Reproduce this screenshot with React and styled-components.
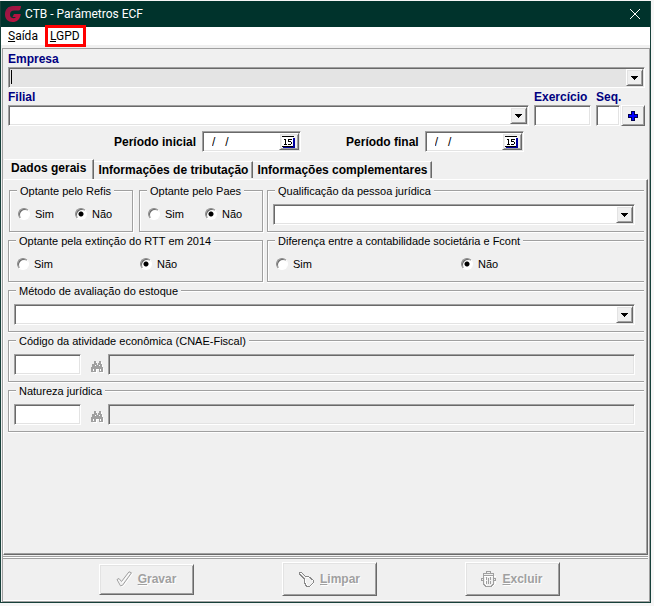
import React from 'react';
import styled, { createGlobalStyle, css } from 'styled-components';

const GlobalStyle = createGlobalStyle`
  * {
    box-sizing: border-box;
  }

  body {
    margin: 0;
    background: #f6f6f6;
    font-family: 'Liberation Sans', Arial, sans-serif;
    font-size: 12px;
    color: #000;
  }

  input, select, button {
    font: inherit;
    color: inherit;
    margin: 0;
    outline: 0;
  }
`;

const raised = css`
  background: #f0f0f0;
  border: 1px solid;
  border-color: #fff #696969 #696969 #fff;
  box-shadow: inset 1px 1px 0 #e3e3e3, inset -1px -1px 0 #a0a0a0;
`;

const sunken = css`
  border: 1px solid;
  border-color: #a0a0a0 #fff #fff #a0a0a0;
  box-shadow: inset 1px 1px 0 #696969, inset -1px -1px 0 #e3e3e3;
`;

const Page = styled.div`
  display: flex;
  min-height: 100vh;
  padding: 1px 3px 3px 0;
`;

const Window = styled.main`
  flex: 1;
  min-width: 0;
  display: flex;
  flex-direction: column;
  background: #f0f0f0;
  border: solid #17403a;
  border-width: 0 1px 1px;
`;

const TitleBar = styled.header`
  display: flex;
  align-items: center;
  gap: 3px;
  height: 26px;
  padding: 0 9px 0 3px;
  background: #00332c;
  color: #fff;
  font-family: Roboto, 'Segoe UI', sans-serif;
`;

const Title = styled.h1`
  flex: 1;
  margin: 0;
  font-size: 12px;
  font-weight: 400;
`;

const CloseButton = styled.button`
  display: flex;
  padding: 0;
  border: 0;
  background: none;
  color: #fff;
`;

const MenuBar = styled.nav`
  display: flex;
  align-items: center;
  height: 18px;
  padding-left: 7px;
  gap: 7px;
  background: #fff;
  font-family: Roboto, 'Segoe UI', sans-serif;
`;

const MenuItem = styled.a`
  color: #000;
  text-decoration: none;
  line-height: 16px;
  ${props => props.$marked && css`
    border: 3px solid #f00;
    padding: 0 3px 0 2px;
  `}
`;

const Body = styled.form`
  flex: 1;
  display: flex;
  flex-direction: column;
  margin: 3px 0 0 1px;
  border: 1px solid #a0a0a0;
`;

const Filters = styled.section`
  padding: 2px 4px 0 5px;
  font-weight: 700;
`;

const Field = styled.div`
  display: flex;
  flex-direction: column;
  flex: ${props => (props.$width ? 'none' : 1)};
  width: ${props => (props.$width ? `${props.$width}px` : 'auto')};
  min-width: 0;
`;

const Caption = styled.label`
  color: #000080;
  font-size: 12px;
  line-height: 16px;
  white-space: nowrap;
`;

const Line = styled.div`
  display: flex;
  align-items: flex-end;
  gap: ${props => props.$gap}px;
  margin-top: ${props => props.$top || 0}px;
`;

const Box = styled.div`
  ${sunken}
  display: flex;
  flex: 1;
  height: 21px;
  min-height: 21px;
  padding: 1px;
  background: ${props => (props.$gray ? '#e4e4e4' : '#fff')};
`;

const Select = styled.select`
  flex: 1;
  min-width: 0;
  padding: 0;
  appearance: none;
  border: 0;
  background: transparent;
`;

const Caret = styled.span`
  width: 1px;
  margin: 1px 0 2px 1px;
  background: #000;
`;

const DropMark = styled.span`
  ${raised}
  display: flex;
  align-items: center;
  justify-content: center;
  width: 17px;
`;

const TextBox = styled.input`
  ${sunken}
  height: 21px;
  width: ${props => (props.$width ? `${props.$width}px` : '100%')};
  flex: ${props => (props.$grow ? 1 : 'none')};
  min-width: 0;
  padding: 0 3px;
  background: ${props => (props.disabled ? '#f0f0f0' : '#fff')};
`;

const AddButton = styled.button`
  ${raised}
  display: flex;
  align-items: center;
  justify-content: center;
  width: 24px;
  height: 21px;
  padding: 0;
`;

const Dates = styled.div`
  display: flex;
  gap: 45px;
  padding: 5px 0 0 106px;
`;

const DateField = styled.div`
  display: flex;
  align-items: center;
  gap: 6px;
`;

const DateBox = styled(Box)`
  flex: none;
  width: 99px;
`;

const DateInput = styled.input`
  flex: 1;
  min-width: 0;
  padding: 0 8px;
  border: 0;
  background: transparent;
  font-weight: 400;
  white-space: pre;
`;

const CalendarButton = styled.button`
  ${raised}
  display: flex;
  align-items: center;
  justify-content: center;
  width: 20px;
  padding: 0;
`;

const TabList = styled.div`
  display: flex;
  align-items: flex-end;
  height: 20px;
  margin-top: 7px;
  padding-left: 1px;
`;

const Tab = styled.button`
  height: ${props => (props.$active ? 20 : 17)}px;
  margin-bottom: ${props => (props.$active ? 0 : 1)}px;
  padding: ${props => (props.$active ? '0 7px 3px' : '0 4px')};
  border: solid;
  border-width: 1px 1px 0 0;
  border-color: #fff #696969;
  box-shadow: inset -1px 0 0 #a0a0a0;
  background: #f0f0f0;
  font-weight: 700;
  white-space: nowrap;
`;

const TabPanel = styled.section`
  flex: 1;
  display: flex;
  flex-direction: column;
  gap: 1px;
  margin-right: 1px;
  padding: 3px 3px 0 4px;
  border: 1px solid;
  border-color: #fff #696969 #696969 #fff;
  box-shadow: inset -1px -1px 0 #a0a0a0;
`;

const Columns = styled.div`
  display: flex;
  gap: 4px;
`;

const Pair = styled.div`
  display: flex;
  gap: 6px;
  width: 255px;
  padding-left: 1px;
`;

const Group = styled.fieldset`
  flex: ${props => (props.$width ? 'none' : 1)};
  width: ${props => (props.$width ? `${props.$width}px` : 'auto')};
  min-width: 0;
  height: 49px;
  margin: 0;
  padding: 0 9px 0 5px;
  border: 1px solid #a0a0a0;
  border-right-width: ${props => (props.$open ? 0 : 1)}px;
  box-shadow: ${props => (props.$open ? 0 : 1)}px 1px 0 #fff, inset 1px 1px 0 #fff;
`;

const Legend = styled.legend`
  margin-left: 2px;
  padding: 2px 3px 0;
  background: #f0f0f0;
  font-size: 11px;
  line-height: 12px;
  white-space: nowrap;
`;

const GroupRow = styled.div`
  display: flex;
  align-items: center;
  height: ${props => (props.$short ? 31 : 33)}px;
  padding-top: 2px;
`;

const RadioLabel = styled.label`
  display: flex;
  align-items: center;
  gap: 5px;
  width: ${props => (props.$width ? `${props.$width}px` : 'auto')};
  padding-left: 3px;
  font-size: 11px;
`;

const Radio = styled.input`
  appearance: none;
  width: 12px;
  height: 12px;
  border-radius: 50%;
  border: 1px solid;
  border-color: #8a8a8a #fff #fff #8a8a8a;
  background: #fff;
  box-shadow: inset 1px 1px 0 #696969;

  &:checked {
    background: radial-gradient(circle, #000 2px, #fff 3px);
  }
`;

const SearchButton = styled.button`
  display: flex;
  padding: 5px 4px 0 10px;
  border: 0;
  background: none;
`;

const Footer = styled.footer`
  display: flex;
  align-items: center;
  justify-content: center;
  gap: 88px;
  margin: 3px 1px 1px 0;
  padding: 3px 0 4px 7px;
  border-top: 1px solid #a0a0a0;
  box-shadow: 0 -1px 0 #fff, 0 -2px 0 #a0a0a0, 0 1px 0 #fff;
`;

const ActionButton = styled.button`
  ${raised}
  display: flex;
  align-items: center;
  justify-content: center;
  gap: 5px;
  width: 95px;
  height: ${props => (props.$low ? 31 : 34)}px;
  padding: 0;
  color: #a0a0a0;
  font-weight: 700;
  text-shadow: 1px 1px 0 #fff;
`;

function Arrow() {
  return (
    <svg width="7" height="4" viewBox="0 0 7 4" shapeRendering="crispEdges">
      <path d="M0 0h7v1H6v1H5v1H4v1H3V3H2V2H1V1H0z" />
    </svg>
  );
}

function Combo({ id, label, gray, caret }) {
  return (
    <Box $gray={gray}>
      {caret && <Caret />}
      <Select id={id} aria-label={label} />
      <DropMark><Arrow /></DropMark>
    </Box>
  );
}

function Logo() {
  return (
    <svg width="18" height="18" viewBox="0 0 18 18">
      <defs>
        <linearGradient id="logo" x1="0" y1="0" x2="1" y2="1">
          <stop offset="0" stopColor="#8d1745" />
          <stop offset="1" stopColor="#c5123f" />
        </linearGradient>
      </defs>
      <path
        fill="url(#logo)"
        d="M17 1H9C4 1 1 4.500 1 9.500 1 14 4 17 8.500 17c4.500 0 7.500-2.500 8.300-8H10L8.500 12H12c-.7.800-1.700 1.200-2.800 1.200C7.200 13.200 6 11.800 6 9.600 6 7.200 7.600 5.600 10.200 5.600h4.300C16 5.400 17 3.500 17 1z"
      />
    </svg>
  );
}

function Plus() {
  return (
    <svg width="10" height="10" viewBox="0 0 10 10" shapeRendering="crispEdges">
      <path fill="#000050" d="M3 0h4v3h3v4H7v3H3V7H0V3h3z" />
      <path fill="#00f" d="M4 1h2v3h3v2H6v3H4V6H1V4h3z" />
    </svg>
  );
}

function Calendar() {
  return (
    <svg width="14" height="12" viewBox="0 0 14 12" shapeRendering="crispEdges">
      <path fill="#fff" d="M0 1h11v9H0z" />
      <path fill="#0000a0" d="M11 2h2v10H1v-1h10z" />
      <path fill="none" stroke="#000" d="M0 .5h12M0 10.500h11M2 3.500h1.500V8M2 8.500h3M10 3.500H6.500v2H9M9.500 6v2M6 8.500h3" />
    </svg>
  );
}

function Binoculars() {
  return (
    <svg width="13" height="12" viewBox="0 0 13 12" shapeRendering="crispEdges">
      <path fill="#fff" d="M4 1h2v3h3V1h2v3h1v3h1v5H9V9H6v3H2V7h1V4h1z" />
      <path fill="#a0a0a0" fillRule="evenodd" d="M3 0h2v2h1v2h1V2h1V0h2v3h1v3h1v5H8V8H5v3H0V6h1V3h2zM2 8h1v2H2zM9 8h1v2H9zM4 4h1v1H4zM8 4h1v1H8z" />
    </svg>
  );
}

function CheckIcon() {
  return (
    <svg width="17" height="16" viewBox="0 0 17 16" fill="none">
      <path stroke="#fff" d="M2 9.500l2-1 2.500 3 7.500-10 2.500 1-9 12.500-2 .5z" />
      <path stroke="#a0a0a0" d="M1 8.500l2-1 2.500 3L13 .8l2.500 1-9 12.500-2 .5z" />
    </svg>
  );
}

function BrushIcon() {
  return (
    <svg width="17" height="17" viewBox="0 0 17 17" fill="none" shapeRendering="crispEdges">
      <path stroke="#fff" d="M2.500 2.500h2l4 4h3l4 4v2l-3 3h-3l-2-4V9l-5-5z" />
      <path stroke="#888" d="M1.500 1.500h2l4 4h3l5 4v2l-4 4h-3l-2-4V8l-5-5z" />
    </svg>
  );
}

function TrashIcon() {
  return (
    <svg width="16" height="16" viewBox="0 0 16 16" fill="none" shapeRendering="crispEdges">
      <path stroke="#fff" d="M3 5.500h12M4 7v6l2 2h6l2-2V7" />
      <path stroke="#a0a0a0" d="M5.500 2.500v-2h4v2M2.500 4.500v-2h10v2zM2.500 5v8l2 2h6l2-2V5M5.500 6v3M7.500 7v6M9.500 6v3M5.500 10v3M9.500 10v3M2 7.500H.5v2H2M13 7.500h1.500v2H13" />
    </svg>
  );
}

function DateInputField({ id, label }) {
  return (
    <DateField>
      <label htmlFor={id}>{label}</label>
      <DateBox>
        <DateInput id={id} defaultValue="/   /" />
        <CalendarButton type="button" aria-label={`Calendário ${label}`}><Calendar /></CalendarButton>
      </DateBox>
    </DateField>
  );
}

function YesNo({ name, legend, width, step, open }) {
  return (
    <Group $width={width} $open={open}>
      <Legend>{legend}</Legend>
      <GroupRow $short>
        <RadioLabel $width={step}><Radio type="radio" name={name} />Sim</RadioLabel>
        <RadioLabel><Radio type="radio" name={name} defaultChecked />Não</RadioLabel>
      </GroupRow>
    </Group>
  );
}

function ComboGroup({ legend }) {
  return (
    <Group $open>
      <Legend>{legend}</Legend>
      <GroupRow><Combo label={legend} /></GroupRow>
    </Group>
  );
}

function Lookup({ legend }) {
  return (
    <Group $open>
      <Legend>{legend}</Legend>
      <GroupRow>
        <TextBox $width={67} aria-label={legend} />
        <SearchButton type="button" disabled aria-label="Pesquisar"><Binoculars /></SearchButton>
        <TextBox $grow disabled aria-label={`${legend} - descrição`} />
      </GroupRow>
    </Group>
  );
}

function App() {
  return (
    <>
      <GlobalStyle />
      <Page>
        <Window>
          <TitleBar>
            <Logo />
            <Title>CTB - Parâmetros ECF</Title>
            <CloseButton type="button" aria-label="Fechar">
              <svg width="12" height="12" viewBox="0 0 12 12">
                <path stroke="currentColor" d="M1 1l10 10M11 1L1 11" />
              </svg>
            </CloseButton>
          </TitleBar>
          <MenuBar>
            <MenuItem href="#saida"><u>S</u>aída</MenuItem>
            <MenuItem href="#lgpd" $marked><u>L</u>GPD</MenuItem>
          </MenuBar>

          <Body>
            <Filters>
              <Field>
                <Caption htmlFor="empresa">Empresa</Caption>
                <Combo id="empresa" gray caret />
              </Field>
              <Line $gap={1} $top={1}>
                <Field>
                  <Line $gap={5}>
                    <Field>
                      <Caption htmlFor="filial">Filial</Caption>
                      <Combo id="filial" />
                    </Field>
                    <Field $width={57}>
                      <Caption htmlFor="exercicio">Exercício</Caption>
                      <TextBox id="exercicio" />
                    </Field>
                    <Field $width={24}>
                      <Caption htmlFor="seq">Seq.</Caption>
                      <TextBox id="seq" />
                    </Field>
                  </Line>
                </Field>
                <AddButton type="button" aria-label="Adicionar"><Plus /></AddButton>
              </Line>
              <Dates>
                <DateInputField id="inicial" label="Período inicial" />
                <DateInputField id="final" label="Período final" />
              </Dates>
            </Filters>

            <TabList role="tablist">
              <Tab type="button" role="tab" aria-selected="true" $active>Dados gerais</Tab>
              <Tab type="button" role="tab" aria-selected="false">Informações de tributação</Tab>
              <Tab type="button" role="tab" aria-selected="false">Informações complementares</Tab>
            </TabList>
            <TabPanel role="tabpanel">
              <Columns>
                <Pair>
                  <YesNo name="refis" legend="Optante pelo Refis" width={124} step={57} />
                  <YesNo name="paes" legend="Optante pelo Paes" width={124} step={57} />
                </Pair>
                <ComboGroup legend="Qualificação da pessoa jurídica" />
              </Columns>
              <Columns>
                <YesNo name="rtt" legend="Optante pela extinção do RTT em 2014" width={255} step={123} />
                <YesNo name="fcont" legend="Diferença entre a contabilidade societária e Fcont" step={185} open />
              </Columns>
              <Columns><ComboGroup legend="Método de avaliação do estoque" /></Columns>
              <Columns><Lookup legend="Código da atividade econômica (CNAE-Fiscal)" /></Columns>
              <Columns><Lookup legend="Natureza jurídica" /></Columns>
            </TabPanel>
            <Footer>
              <ActionButton type="button" disabled $low><CheckIcon /><span><u>G</u>ravar</span></ActionButton>
              <ActionButton type="button" disabled><BrushIcon /><span><u>L</u>impar</span></ActionButton>
              <ActionButton type="button" disabled><TrashIcon /><span><u>E</u>xcluir</span></ActionButton>
            </Footer>
          </Body>
        </Window>
      </Page>
    </>
  );
}

export default App;
